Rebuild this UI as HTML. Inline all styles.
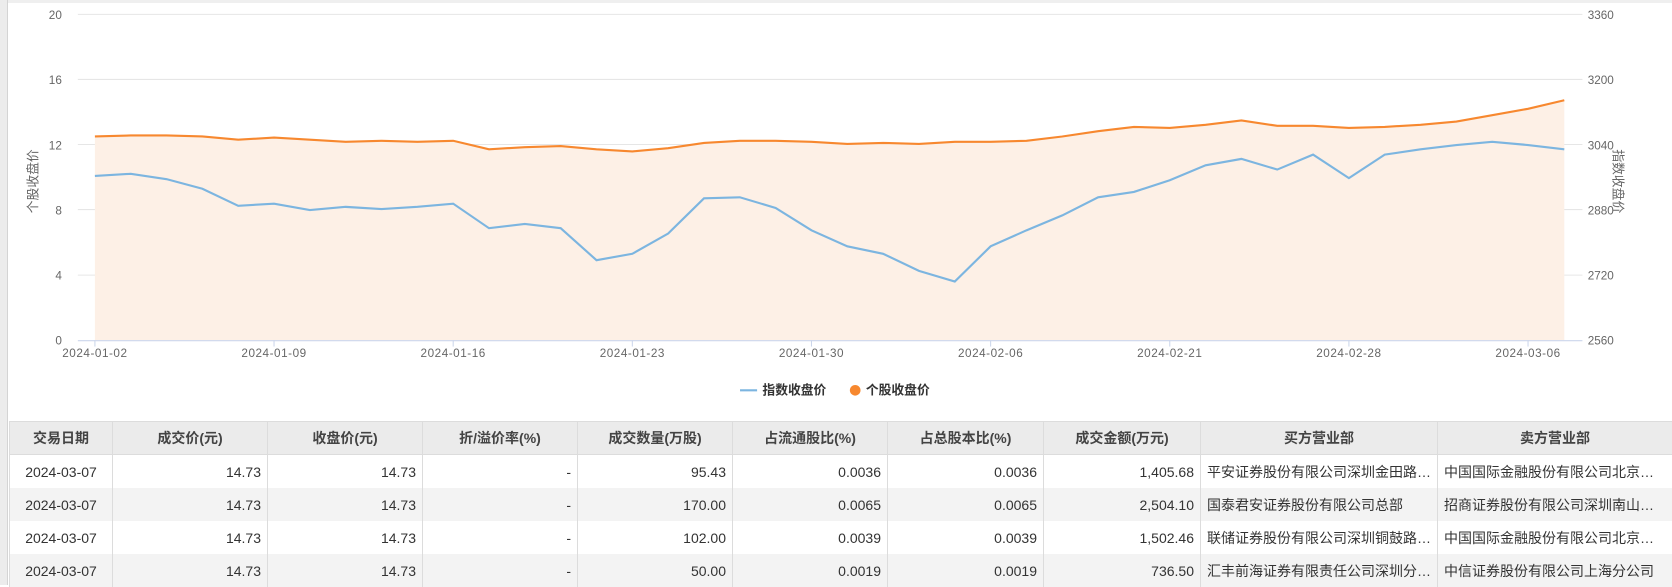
<!DOCTYPE html>
<html><head><meta charset="utf-8"><style>
body{margin:0;width:1672px;height:585px;overflow:hidden;background:#fff;font-family:"Liberation Sans","Noto Sans CJK SC",sans-serif;position:relative}
#lb{position:absolute;left:0;top:0;width:7px;height:585px;background:#ececec;border-right:1px solid #d4d4d4}
#tb{position:absolute;left:0;top:0;width:1672px;height:3px;background:#efefef}
svg{position:absolute;left:0;top:0}
table{position:absolute;left:9px;top:421px;border-collapse:collapse;table-layout:fixed;width:1663px;font-size:14px;color:#333}
th{background:#ebebeb;font-weight:bold;height:32px;border:1px solid #dcdcdc;padding:0 6px;color:#444}
td{height:33px;border-left:1px solid #dcdcdc;border-right:1px solid #dcdcdc;padding:0 6px;white-space:nowrap;overflow:hidden;text-overflow:ellipsis}
tr.a td{background:#f3f3f3}
.r{text-align:right}.c{text-align:center}.l{text-align:left}
</style></head><body>
<div id="tb"></div><div id="lb"></div>
<svg width="1672" height="585" viewBox="0 0 1568 548.6" font-family="Liberation Sans, Noto Sans CJK SC, sans-serif">
<g stroke="#e6e6e6" stroke-width="1">
<line x1="73" y1="13.5" x2="1484" y2="13.5"/><line x1="73" y1="74.5" x2="1484" y2="74.5"/><line x1="73" y1="135.5" x2="1484" y2="135.5"/><line x1="73" y1="196.5" x2="1484" y2="196.5"/><line x1="73" y1="258" x2="1484" y2="258"/>
</g>
<polygon fill="#fdf0e6" points="89,319 89,128 122.6,127 156.2,127 189.8,128 223.4,131 257,129 290.6,131 324.2,133 357.8,132 391.4,133 425,132 458.6,140 492.2,138 525.8,137 559.4,140 593,142 626.6,139 660.2,134 693.8,132 727.4,132 761,133 794.6,135 828.2,134 861.8,135 895.4,133 929,133 962.6,132 996.2,128 1029.8,123 1063.4,119 1097,120 1130.6,117 1164.2,113 1197.8,118 1231.4,118 1265,120 1298.6,119 1332.2,117 1365.8,114 1399.4,108 1433,102 1467,94 1467,319"/>
<line x1="73" y1="319.5" x2="1484" y2="319.5" stroke="#ccd6eb"/>
<g stroke="#ccd6eb"><line x1="89" y1="319" x2="89" y2="325"/><line x1="257" y1="319" x2="257" y2="325"/><line x1="425" y1="319" x2="425" y2="325"/><line x1="593" y1="319" x2="593" y2="325"/><line x1="761" y1="319" x2="761" y2="325"/><line x1="929" y1="319" x2="929" y2="325"/><line x1="1097" y1="319" x2="1097" y2="325"/><line x1="1265" y1="319" x2="1265" y2="325"/><line x1="1433" y1="319" x2="1433" y2="325"/></g>
<polyline fill="none" stroke="#f7882f" stroke-width="2" points="89,128 122.6,127 156.2,127 189.8,128 223.4,131 257,129 290.6,131 324.2,133 357.8,132 391.4,133 425,132 458.6,140 492.2,138 525.8,137 559.4,140 593,142 626.6,139 660.2,134 693.8,132 727.4,132 761,133 794.6,135 828.2,134 861.8,135 895.4,133 929,133 962.6,132 996.2,128 1029.8,123 1063.4,119 1097,120 1130.6,117 1164.2,113 1197.8,118 1231.4,118 1265,120 1298.6,119 1332.2,117 1365.8,114 1399.4,108 1433,102 1467,94"/>
<polyline fill="none" stroke="#7cb5e0" stroke-width="2" points="89,165 122.6,163 156.2,168 189.8,177 223.4,193 257,191 290.6,197 324.2,194 357.8,196 391.4,194 425,191 458.6,214 492.2,210 525.8,214 559.4,244 593,238 626.6,219 660.2,186 693.8,185 727.4,195 761,216 794.6,231 828.2,238 861.8,254 895.4,264 929,231 962.6,216 996.2,202 1029.8,185 1063.4,180 1097,169 1130.6,155 1164.2,149 1197.8,159 1231.4,145 1265,167 1298.6,145 1332.2,140 1365.8,136 1399.4,133 1433,136 1467,140"/>
<g font-size="11" fill="#666" text-anchor="end">
<text x="58" y="18">20</text><text x="58" y="79">16</text><text x="58" y="140">12</text><text x="58" y="201">8</text><text x="58" y="262">4</text><text x="58" y="323">0</text>
</g>
<g font-size="11" fill="#666">
<text x="1489" y="18">3360</text><text x="1489" y="79">3200</text><text x="1489" y="140">3040</text><text x="1489" y="201">2880</text><text x="1489" y="262">2720</text><text x="1489" y="323">2560</text>
</g>
<g font-size="11" fill="#666" text-anchor="middle" letter-spacing="0.5">
<text x="89" y="335">2024-01-02</text><text x="257" y="335">2024-01-09</text><text x="425" y="335">2024-01-16</text><text x="593" y="335">2024-01-23</text><text x="761" y="335">2024-01-30</text><text x="929" y="335">2024-02-06</text><text x="1097" y="335">2024-02-21</text><text x="1265" y="335">2024-02-28</text><text x="1433" y="335">2024-03-06</text>
</g>
<text transform="translate(35,170) rotate(-90)" font-size="12" fill="#666" text-anchor="middle">个股收盘价</text>
<text transform="translate(1513,170) rotate(90)" font-size="12" fill="#666" text-anchor="middle">指数收盘价</text>
<line x1="694" y1="366" x2="710" y2="366" stroke="#7cb5e0" stroke-width="2"/>
<text x="715" y="370" font-size="12" font-weight="bold" fill="#333">指数收盘价</text>
<circle cx="802" cy="366" r="5" fill="#f7882f"/>
<text x="812" y="370" font-size="12" font-weight="bold" fill="#333">个股收盘价</text>
</svg>
<table>
<colgroup><col style="width:103px"><col style="width:155px"><col style="width:155px"><col style="width:155px"><col style="width:155px"><col style="width:155px"><col style="width:156px"><col style="width:157px"><col style="width:237px"><col style="width:235px"></colgroup>
<tr><th>交易日期</th><th>成交价(元)</th><th>收盘价(元)</th><th>折/溢价率(%)</th><th>成交数量(万股)</th><th>占流通股比(%)</th><th>占总股本比(%)</th><th>成交金额(万元)</th><th>买方营业部</th><th>卖方营业部</th></tr>
<tr><td class="c">2024-03-07</td><td class="r">14.73</td><td class="r">14.73</td><td class="r">-</td><td class="r">95.43</td><td class="r">0.0036</td><td class="r">0.0036</td><td class="r">1,405.68</td><td class="l">平安证券股份有限公司深圳金田路证券营业部</td><td class="l">中国国际金融股份有限公司北京建国门外大街证券营业部</td></tr>
<tr class="a"><td class="c">2024-03-07</td><td class="r">14.73</td><td class="r">14.73</td><td class="r">-</td><td class="r">170.00</td><td class="r">0.0065</td><td class="r">0.0065</td><td class="r">2,504.10</td><td class="l">国泰君安证券股份有限公司总部</td><td class="l">招商证券股份有限公司深圳南山南油大道证券营业部</td></tr>
<tr><td class="c">2024-03-07</td><td class="r">14.73</td><td class="r">14.73</td><td class="r">-</td><td class="r">102.00</td><td class="r">0.0039</td><td class="r">0.0039</td><td class="r">1,502.46</td><td class="l">联储证券股份有限公司深圳铜鼓路证券营业部</td><td class="l">中国国际金融股份有限公司北京建国门外大街证券营业部</td></tr>
<tr class="a"><td class="c">2024-03-07</td><td class="r">14.73</td><td class="r">14.73</td><td class="r">-</td><td class="r">50.00</td><td class="r">0.0019</td><td class="r">0.0019</td><td class="r">736.50</td><td class="l">汇丰前海证券有限责任公司深圳分公司</td><td class="l">中信证券股份有限公司上海分公司</td></tr>
</table>
</body></html>
